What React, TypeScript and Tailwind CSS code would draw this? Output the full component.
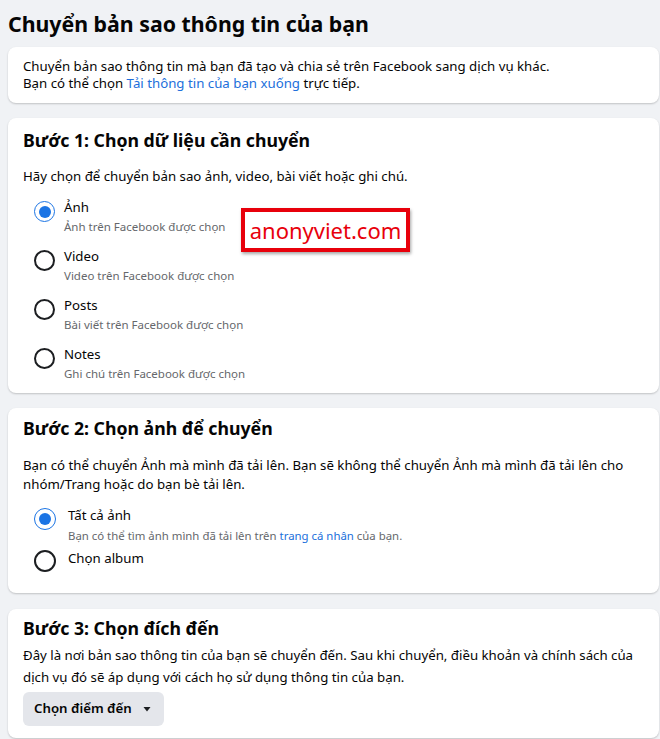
import React from "react";

const font = { fontFamily: '"Noto Sans", "Open Sans", sans-serif' };

function Radio({ checked, size = 21 }: { checked?: boolean; size?: number }) {
  const sz = size === 22 ? "h-[22px] w-[22px]" : "h-[21px] w-[21px]";
  return checked ? (
    <span className={`flex ${sz} shrink-0 items-center justify-center rounded-full border-[1.5px] border-[#1b74e4]`}>
      <span className="block h-[12px] w-[12px] rounded-full bg-[#1b74e4]" />
    </span>
  ) : (
    <span className={`block ${sz} shrink-0 rounded-full border-2 border-[#1c1e21]`} />
  );
}

function Option({ checked, label, sub }: { checked?: boolean; label: string; sub: string }) {
  return (
    <div className="flex items-start gap-[9px] pl-[11px]">
      <div className="pt-[3px]">
        <Radio checked={checked} />
      </div>
      <div className="flex flex-col">
        <span className="text-[13.25px] leading-[19px] text-[#050505]">{label}</span>
        <span className="text-[11.5px] leading-[19px] text-[#65676b]">{sub}</span>
      </div>
    </div>
  );
}

export default function App() {
  return (
    <div className="min-h-screen bg-[#f0f2f5] pb-4 pl-2 pr-[1px] pt-[8px] text-[#050505]" style={font}>
      <h1 className="text-[21.3px] font-bold leading-[32px]">Chuyển bản sao thông tin của bạn</h1>

      <div className="mt-[7px] rounded-lg bg-white px-[15px] pb-[11px] pt-[11px] text-[13.25px] leading-[17px] shadow-[0_1px_2px_rgba(0,0,0,0.2)]">
        <p>Chuyển bản sao thông tin mà bạn đã tạo và chia sẻ trên Facebook sang dịch vụ khác.</p>
        <p>
          Bạn có thể chọn <span className="text-[#216fdb]">Tải thông tin của bạn xuống</span> trực tiếp.
        </p>
      </div>

      <div className="relative mt-[15px] rounded-lg bg-white px-[15px] pb-[10px] pt-[10px] shadow-[0_1px_2px_rgba(0,0,0,0.2)]">
        <h2 className="text-[17.7px] font-bold leading-[24px]">Bước 1: Chọn dữ liệu cần chuyển</h2>
        <p className="mt-[16px] text-[13.25px] leading-[17px]">Hãy chọn để chuyển bản sao ảnh, video, bài viết hoặc ghi chú.</p>
        <div className="mt-[13px] flex flex-col gap-[11px]">
          <Option checked label="Ảnh" sub="Ảnh trên Facebook được chọn" />
          <Option label="Video" sub="Video trên Facebook được chọn" />
          <Option label="Posts" sub="Bài viết trên Facebook được chọn" />
          <Option label="Notes" sub="Ghi chú trên Facebook được chọn" />
        </div>
        <div className="absolute left-[233px] top-[90px] flex h-[44px] w-[169px] items-center justify-center border-[4px] border-[#e8000b] bg-white shadow-[1px_2px_3px_rgba(0,0,0,0.35)]">
          <span className="text-[22px] leading-none text-[#e8000b]">anonyviet.com</span>
        </div>
      </div>

      <div className="mt-[15px] rounded-lg bg-white px-[15px] pb-[21px] pt-[8px] shadow-[0_1px_2px_rgba(0,0,0,0.2)]">
        <h2 className="text-[17.7px] font-bold leading-[24px]">Bước 2: Chọn ảnh để chuyển</h2>
        <p className="mt-[16px] text-[13.25px] leading-[19px]">
          Bạn có thể chuyển Ảnh mà mình đã tải lên. Bạn sẽ không thể chuyển Ảnh mà mình đã tải lên cho nhóm/Trang hoặc do bạn bè tải lên.
        </p>
        <div className="mt-[12px] flex flex-col">
          <div className="flex items-start gap-[12px] pl-[11px]">
            <div className="pt-[2px]">
              <Radio checked size={22} />
            </div>
            <div className="flex flex-col">
              <span className="text-[13.25px] leading-[19px]">Tất cả ảnh</span>
              <span className="mt-[2px] text-[11.4px] leading-[17px] text-[#65676b]">
                Bạn có thể tìm ảnh mình đã tải lên trên <span className="text-[#216fdb]">trang cá nhân</span> của bạn.
              </span>
            </div>
          </div>
          <div className="mt-[5px] flex items-start gap-[12px] pl-[11px]">
            <div className="pt-[1px]">
              <Radio size={22} />
            </div>
            <span className="text-[13.25px] leading-[19px]">Chọn album</span>
          </div>
        </div>
      </div>

      <div className="mt-[16px] rounded-lg bg-white px-[15px] pb-[12px] pt-[7px] shadow-[0_1px_2px_rgba(0,0,0,0.2)]">
        <h2 className="text-[17.7px] font-bold leading-[24px]">Bước 3: Chọn đích đến</h2>
        <p className="mt-[5px] text-[13.25px] leading-[21.5px]">
          Đây là nơi bản sao thông tin của bạn sẽ chuyển đến. Sau khi chuyển, điều khoản và chính sách của dịch vụ đó sẽ áp dụng với cách họ sử dụng thông tin của bạn.
        </p>
        <button className="mt-[4px] flex h-[34px] w-[141px] items-center gap-[10px] rounded-md bg-[#e4e6eb] pl-[11px] text-[13.25px] font-semibold text-[#050505]">
          Chọn điểm đến
          <svg width="10" height="10" viewBox="0 0 10 10">
            <path d="M1.5 3 L8.5 3 L5 7.5 Z" fill="#1c1e21" />
          </svg>
        </button>
      </div>
    </div>
  );
}
